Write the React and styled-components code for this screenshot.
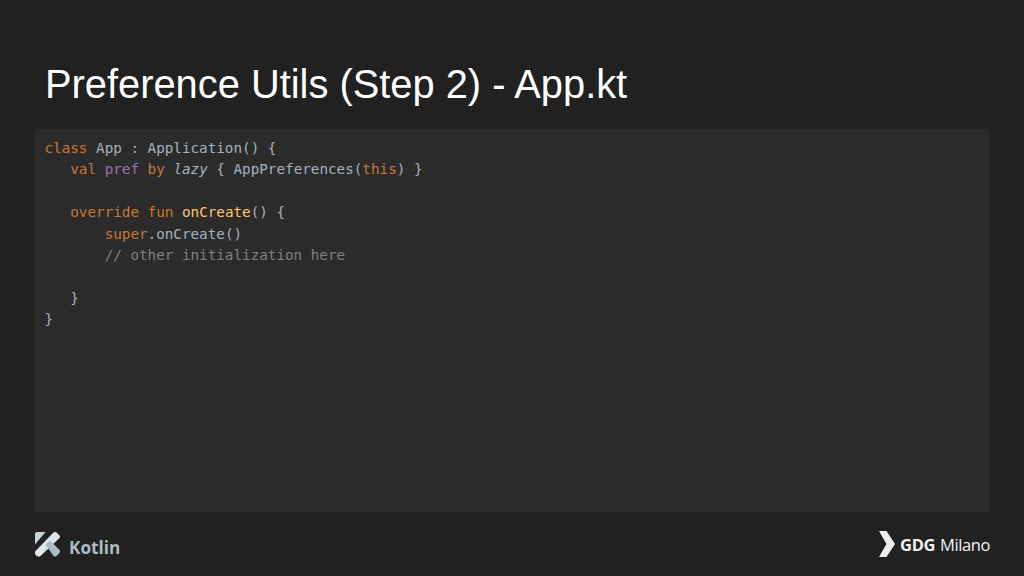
import React from 'react'
import styled, { createGlobalStyle } from 'styled-components'

const GlobalStyle = createGlobalStyle`
  html, body {
    margin: 0;
    padding: 0;
    background: #212121;
  }
`

const Slide = styled.div`
  width: 1024px;
  height: 576px;
  background: #212121;
  display: flex;
  flex-direction: column;
  overflow: hidden;
`

const Title = styled.h1`
  margin: 0;
  height: 129px;
  box-sizing: border-box;
  padding: 62px 0 0 45px;
  color: #fff;
  font-family: "Liberation Sans", Arial, sans-serif;
  font-size: 39.85px;
  line-height: 44px;
  font-weight: 400;
`

const CodePanel = styled.pre`
  margin: 0 35px;
  height: 383px;
  box-sizing: border-box;
  padding: 9px 9.5px 0;
  background: #2b2b2b;
  color: #a6b2bf;
  font-family: "DejaVu Sans Mono", "Liberation Mono", monospace;
  font-size: 14.27px;
  line-height: 21.4px;
`

const Token = styled.span`
  color: ${(p) => p.$color};
  font-style: ${(p) => (p.$italic ? 'italic' : 'normal')};
`

const Footer = styled.footer`
  flex: 1;
  display: flex;
  align-items: center;
  justify-content: space-between;
  padding: 0 34px 0 35px;
`

const Brand = styled.div`
  display: flex;
  align-items: center;
  gap: ${(p) => p.$gap}px;
`

const KotlinName = styled.span`
  color: #a9bcc4;
  font-family: "Open Sans", sans-serif;
  font-weight: 700;
  font-size: 17.2px;
  padding-top: 7px;
`

const GdgName = styled.span`
  color: #f2f2f2;
  font-family: "Open Sans", sans-serif;
  font-size: 16.5px;
  letter-spacing: -0.4px;
  font-weight: ${(p) => (p.$bold ? 700 : 400)};
`

const ORANGE = '#cc7832'
const PURPLE = '#9876aa'
const YELLOW = '#ffc66d'
const GREY = '#808080'

const KotlinLogo = () => (
  <svg width="25" height="25" viewBox="0 0 25 25">
    <path d="M2 0h8.500L0 12.500V2C0 1 1 0 2 0z" fill="#c9d4d8" />
    <path d="M0 20.500L3 17.500l3.500 3.500L3.500 24.500C1.500 24.500 0 23 0 20.500z" fill="#b8c6cc" />
    <path d="M18.500 0.500c1 -0.700 2 -0.700 3 0l3 3c0.700 0.800 0.700 1.700 0 2.500L5.500 24c-1 0.800-2 0.800-3 0L0.500 22c-0.800-1-0.800-2 0-3z" fill="#dfe6e9" />
    <path d="M10.500 12.500l4.500-4 9.500 9.500c0.700 1 0.700 2 0 3l-3 3c-1 0.800-2 0.800-3 0z" fill="#a9bcc4" />
  </svg>
)

const GdgChevron = () => (
  <svg width="16" height="26" viewBox="0 0 15 26" preserveAspectRatio="none">
    <path d="M0 0h7l8 13-8 13H0l7-13z" fill="#eeeeee" />
  </svg>
)

export default function App() {
  return (
    <Slide>
      <GlobalStyle />
      <Title>Preference Utils (Step 2) - App.kt</Title>
      <CodePanel>
        <Token $color={ORANGE}>class</Token>{' App : Application() {\n'}
        {'   '}<Token $color={ORANGE}>val</Token> <Token $color={PURPLE}>pref</Token> <Token $color={ORANGE}>by</Token> <Token $italic>lazy</Token>{' { AppPreferences('}<Token $color={ORANGE}>this</Token>{') }\n\n'}
        {'   '}<Token $color={ORANGE}>override fun</Token> <Token $color={YELLOW}>onCreate</Token>{'() {\n'}
        {'       '}<Token $color={ORANGE}>super</Token>{'.onCreate()\n'}
        {'       '}<Token $color={GREY}>// other initialization here</Token>{'\n\n'}
        {'   }\n}'}
      </CodePanel>
      <Footer>
        <Brand $gap={9}>
          <KotlinLogo />
          <KotlinName>Kotlin</KotlinName>
        </Brand>
        <Brand $gap={5}>
          <GdgChevron />
          <GdgName $bold>GDG</GdgName>
          <GdgName>Milano</GdgName>
        </Brand>
      </Footer>
    </Slide>
  )
}
